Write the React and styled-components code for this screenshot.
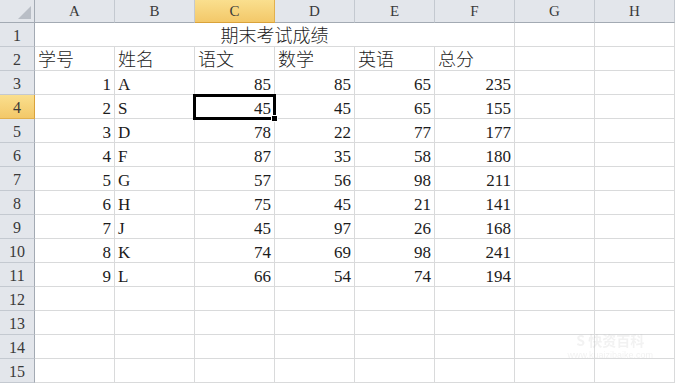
import React from "react";
import styled, { createGlobalStyle, css } from "styled-components";

const Global = createGlobalStyle`
  html, body { margin: 0; padding: 0; background: #ffffff; }
  body { overflow: hidden; }
`;

const COLS = ["A", "B", "C", "D", "E", "F", "G", "H"];
const SEL_COL = 2;
const SEL_ROW = 4;

const data = [
  [1, "A", 85, 85, 65, 235],
  [2, "S", 45, 45, 65, 155],
  [3, "D", 78, 22, 77, 177],
  [4, "F", 87, 35, 58, 180],
  [5, "G", 57, 56, 98, 211],
  [6, "H", 75, 45, 21, 141],
  [7, "J", 45, 97, 26, 168],
  [8, "K", 74, 69, 98, 241],
  [9, "L", 66, 54, 74, 194],
];

const Sheet = styled.div`
  display: grid;
  grid-template-columns: 35px repeat(8, 80px);
  grid-template-rows: 23px repeat(15, 24px);
  width: 675px;
  height: 387px;
  overflow: hidden;
  font-family: "Liberation Serif", "Noto Sans CJK SC", serif;
  background: #fff;
`;

const HeaderCell = styled.div`
  box-sizing: border-box;
  display: flex;
  align-items: center;
  justify-content: center;
  font-family: "Liberation Serif", serif;
  font-size: 15px;
  color: #3a3a3a;
  background: ${(p) => (p.$active ? "linear-gradient(#fadf8e, #f3c869)" : "#e3e6eb")};
  border-right: 1px solid ${(p) => (p.$active ? "#e2b04d" : "#c4c9d0")};
  border-bottom: 1px solid ${(p) => (p.$active ? "#d9a23a" : "#a3aab3")};
  padding-top: 1px;
`;

const ColHeader = styled(HeaderCell)`
  border-bottom: 1px solid ${(p) => (p.$active ? "#d9a23a" : "#a3aab3")};
`;

const RowHeader = styled(HeaderCell)`
  border-right: 1px solid ${(p) => (p.$active ? "#d9a23a" : "#a3aab3")};
  border-bottom: 1px solid ${(p) => (p.$active ? "#e2b04d" : "#c4c9d0")};
  font-size: 16px;
  padding-top: 2px;
`;

const Corner = styled.div`
  box-sizing: border-box;
  background: #e3e6eb;
  border-right: 1px solid #a3aab3;
  border-bottom: 1px solid #a3aab3;
  display: flex;
  align-items: flex-end;
  justify-content: flex-end;
  padding: 0 3px 3px 0;
`;

const Triangle = styled.div`
  width: 0;
  height: 0;
  border-left: 13px solid transparent;
  border-bottom: 13px solid #b9bec6;
`;

const Cell = styled.div`
  box-sizing: border-box;
  position: relative;
  display: flex;
  align-items: flex-end;
  justify-content: ${(p) => (p.$align === "right" ? "flex-end" : p.$align === "center" ? "center" : "flex-start")};
  padding: 0 3px 0 3px;
  border-right: 1px solid #d9dadb;
  border-bottom: 1px solid #d9dadb;
  font-size: ${(p) => (p.$cjk ? "18px" : "17px")};
  font-weight: ${(p) => (p.$cjk ? 300 : 400)};
  line-height: 19px;
  color: #1c1c1c;
  white-space: nowrap;
  grid-column: ${(p) => (p.$span ? `span ${p.$span}` : "auto")};
  ${(p) =>
    p.$selected &&
    css`
      &::before {
        content: "";
        position: absolute;
        left: -2px;
        right: -2px;
        top: -1px;
        bottom: -2px;
        border: 3px solid #000;
        z-index: 2;
        pointer-events: none;
      }
      &::after {
        content: "";
        position: absolute;
        right: -4px;
        bottom: -4px;
        width: 5px;
        height: 5px;
        background: #000;
        border: 1px solid #fff;
        z-index: 3;
      }
    `}
`;

const Watermark = styled.div`
  position: fixed;
  right: 22px;
  bottom: 24px;
  display: flex;
  flex-direction: column;
  align-items: center;
  color: rgba(190, 190, 190, 0.2);
  font-family: "Noto Sans CJK SC", sans-serif;
  font-size: 14px;
  font-weight: 700;
  line-height: 15px;
  pointer-events: none;
`;

const WmSmall = styled.span`
  font-size: 9px;
  font-weight: 400;
  font-family: "Liberation Sans", sans-serif;
`;

function renderRow(r) {
  const cells = [];
  if (r === 1) {
    cells.push(
      <Cell key="m" $span={6} $align="center" $cjk>
        期末考试成绩
      </Cell>
    );
    cells.push(<Cell key="g" />, <Cell key="h" />);
    return cells;
  }
  if (r === 2) {
    const labels = ["学号", "姓名", "语文", "数学", "英语", "总分", "", ""];
    return labels.map((t, i) => (
      <Cell key={i} $align="left" $cjk>
        {t}
      </Cell>
    ));
  }
  const d = data[r - 3];
  for (let c = 0; c < 8; c++) {
    const v = d ? d[c] : undefined;
    const isText = typeof v === "string";
    cells.push(
      <Cell key={c} $align={isText ? "left" : "right"} $selected={r === SEL_ROW && c === SEL_COL}>
        {v !== undefined ? v : ""}
      </Cell>
    );
  }
  return cells;
}

export default function App() {
  const rows = Array.from({ length: 15 }, (_, i) => i + 1);
  return (
    <>
      <Global />
      <Sheet>
        <Corner>
          <Triangle />
        </Corner>
        {COLS.map((c, i) => (
          <ColHeader key={c} $active={i === SEL_COL}>
            {c}
          </ColHeader>
        ))}
        {rows.map((r) => (
          <React.Fragment key={r}>
            <RowHeader $active={r === SEL_ROW}>{r}</RowHeader>
            {renderRow(r)}
          </React.Fragment>
        ))}
      </Sheet>
      <Watermark>
        <span>S 快资百科</span>
        <WmSmall>www.kuaizibaike.com</WmSmall>
      </Watermark>
    </>
  );
}
